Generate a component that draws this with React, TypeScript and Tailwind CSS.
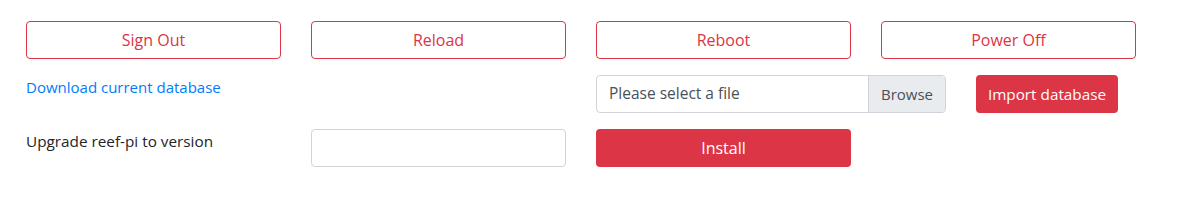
export default function App() {
  const outline =
    "h-[38px] w-full rounded border border-[#dc3545] bg-white text-base text-[#dc3545]";

  return (
    <div className="bg-white px-[26px] pt-[21px] font-['Open_Sans',sans-serif] text-base text-[#212529]">
      <div className="grid w-[1110px] grid-cols-4 gap-x-[30px] gap-y-4">
        <button className={outline}>Sign Out</button>
        <button className={outline}>Reload</button>
        <button className={outline}>Reboot</button>
        <button className={outline}>Power Off</button>

        <div className="col-span-2 leading-6">
          <a href="#" className="text-[15px] text-[#007bff]">
            Download current database
          </a>
        </div>
        <div className="col-span-2 flex items-start gap-[30px]">
          <div className="flex h-[38px] w-[350px] overflow-hidden rounded border border-[#ced4da]">
            <div className="flex flex-1 items-center px-3 text-[15.5px] text-[#495057]">Please select a file</div>
            <div className="flex items-center border-l border-[#ced4da] bg-[#e9ecef] px-3 text-[15px] text-[#495057]">
              Browse
            </div>
          </div>
          <button className="h-[38px] w-[142px] rounded bg-[#dc3545] text-[15.3px] text-white">Import database</button>
        </div>
      </div>

      <div className="mt-4 grid w-[1110px] grid-cols-4 gap-x-[30px]">
        <div className="text-[15.3px] leading-6">Upgrade reef-pi to version</div>
        <input
          type="text"
          className="h-[38px] w-full rounded border border-[#ced4da] px-3 outline-none"
        />
        <button className="h-[38px] w-full rounded bg-[#dc3545] text-white">Install</button>
      </div>
    </div>
  );
}
